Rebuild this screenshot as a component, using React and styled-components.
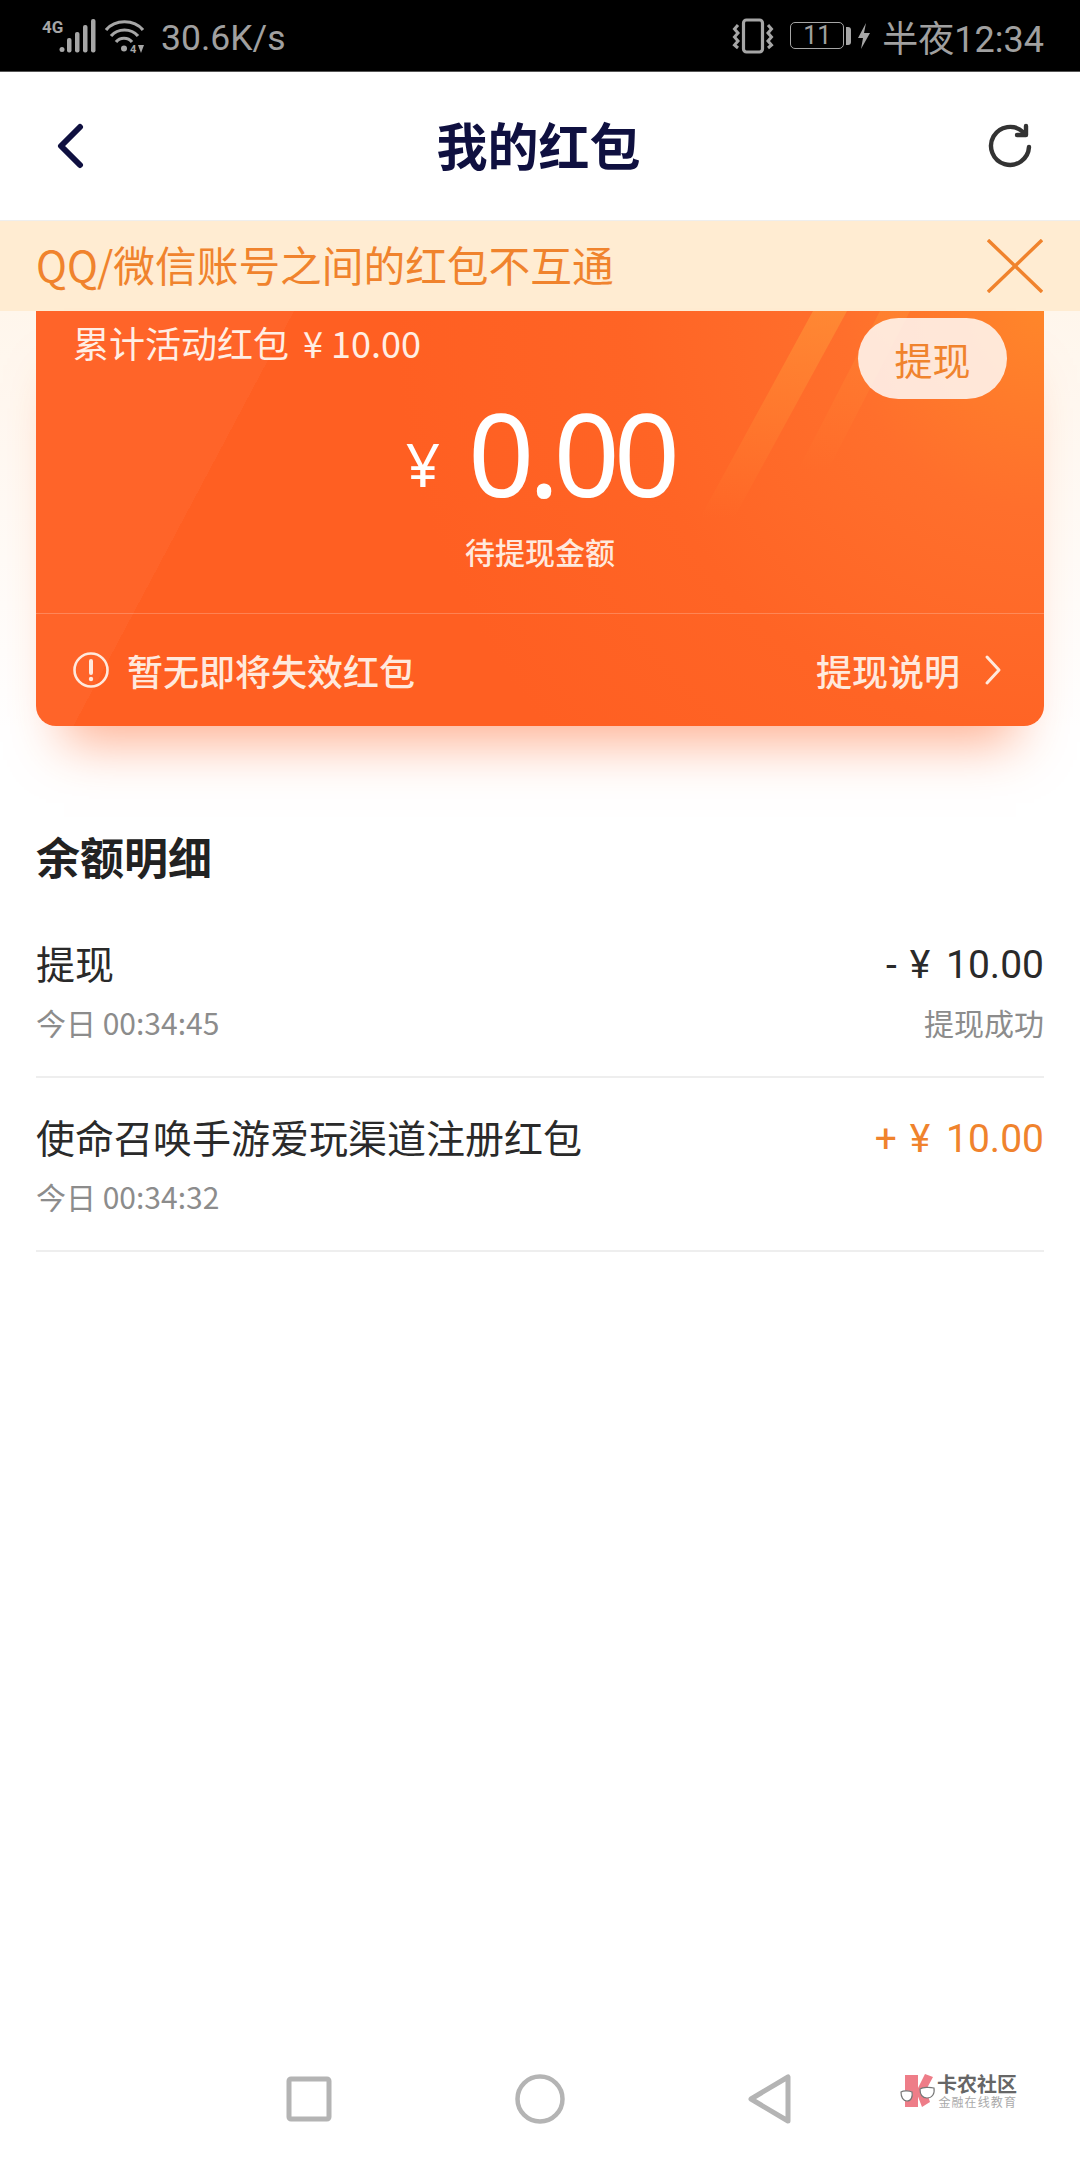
import React from "react";
import styled, { createGlobalStyle } from "styled-components";

const cjk = `"Noto Sans CJK SC", "Noto Sans", sans-serif`;

const GlobalStyle = createGlobalStyle`
  html, body {
    margin: 0;
    padding: 0;
    background: #fff;
  }
  * {
    box-sizing: border-box;
  }
`;

const records = [
  { title: "提现", time: "今日 00:34:45", sign: "-", amount: "10.00", status: "提现成功" },
  { title: "使命召唤手游爱玩渠道注册红包", time: "今日 00:34:32", sign: "+", amount: "10.00", income: true },
];

const App = () => {
  return (
    <Page>
      <GlobalStyle />
      <StatusBar>
        <StatusGroup>
          <SignalIcon width="56" height="38" viewBox="0 -4 56 38" fill="#a6a6a6">
            <text x="0" y="14" fontSize="17" fontWeight="700" fontFamily="Roboto, sans-serif">4G</text>
            <circle cx="20" cy="30.5" r="2.5" />
            <rect x="25" y="19" width="4.5" height="14.5" rx="2" />
            <rect x="33" y="13" width="4.5" height="20.5" rx="2" />
            <rect x="41" y="6" width="4.5" height="27.5" rx="2" />
            <rect x="49" y="0" width="4.5" height="33.5" rx="2" />
          </SignalIcon>
          <WifiIcon width="40" height="40" viewBox="0 0 40 40" fill="none" stroke="#a6a6a6" strokeWidth="3.2">
            <path d="M1 11C10 0 29 0 38 11" />
            <path d="M6 17C13 9 26 9 33 17" />
            <path d="M11 23C15 18 23 18 27 23" />
            <circle cx="19" cy="29.5" r="3" fill="#a6a6a6" stroke="none" />
            <text x="25" y="33.5" fontSize="11" fontWeight="700" fontFamily="Roboto, sans-serif" fill="#a6a6a6" stroke="none">4</text>
            <path d="M33 26h6l-3 8z" fill="#a6a6a6" stroke="none" />
          </WifiIcon>
          <Speed>30.6K/s</Speed>
        </StatusGroup>
        <StatusGroup>
          <svg width="42" height="36" viewBox="0 0 42 36" fill="none" stroke="#a6a6a6">
            <rect x="11.5" y="2" width="19" height="32" rx="3" strokeWidth="3.2" />
            <path d="M6 7L2.5 11 6 15 2.5 19 6 23 2.5 27 6 30M36 7l3.5 4-3.5 4 3.5 4-3.5 4 3.5 4-3.5 3" strokeWidth="3" />
          </svg>
          <Battery>
            <BatteryBody>11</BatteryBody>
            <BatteryCap />
          </Battery>
          <svg width="12" height="26" viewBox="0 0 12 26" fill="#a6a6a6">
            <path d="M8 0L0 15h5L3 26l9-16H6z" />
          </svg>
          <Clock>半夜12:34</Clock>
        </StatusGroup>
      </StatusBar>

      <NavBar>
        <IconSlot>
          <svg width="28" height="48" viewBox="0 0 28 48" fill="none" stroke="#0f1040" strokeWidth="6" strokeLinecap="round" strokeLinejoin="round">
            <path d="M24 5L5 24l19 19" />
          </svg>
        </IconSlot>
        <NavTitle>我的红包</NavTitle>
        <IconSlot $right>
          <svg width="44" height="46" viewBox="0 0 44 46" fill="none" stroke="#333" strokeWidth="4.4" strokeLinecap="round">
            <path d="M41 24a19 19 0 1 1-6-15" />
            <path d="M38 3v9h-9" strokeLinejoin="round" />
          </svg>
        </IconSlot>
      </NavBar>

      <Banner>
        <BannerText>QQ/微信账号之间的红包不互通</BannerText>
        <svg width="56" height="54" viewBox="0 0 56 54" stroke="#f0832d" strokeWidth="3.4">
          <path d="M1 1l54 52M55 1L1 53" />
        </svg>
      </Banner>

      <CardArea>
        <Card>
          <CardTop>
            <Total>
              累计活动红包<TotalYen>¥</TotalYen>10.00
            </Total>
            <WithdrawButton>提现</WithdrawButton>
          </CardTop>
          <Balance>
            <BalanceUnit>¥</BalanceUnit>
            <BalanceValue>0.00</BalanceValue>
          </Balance>
          <BalanceLabel>待提现金额</BalanceLabel>
          <CardFooter>
            <FooterSide>
              <svg width="36" height="36" viewBox="0 0 36 36" fill="none" stroke="#ffe9dd" strokeWidth="2.6">
                <circle cx="18" cy="18" r="16.5" />
                <path d="M18 9v12" strokeWidth="4" strokeLinecap="round" />
                <circle cx="18" cy="27" r="2.2" fill="#ffe9dd" stroke="none" />
              </svg>
              暂无即将失效红包
            </FooterSide>
            <FooterSide $wide>
              提现说明
              <svg width="18" height="32" viewBox="0 0 18 32" fill="none" stroke="#ffe9dd" strokeWidth="3" strokeLinecap="round" strokeLinejoin="round">
                <path d="M3 3l12 13L3 29" />
              </svg>
            </FooterSide>
          </CardFooter>
        </Card>
      </CardArea>

      <Details>
        <DetailsTitle>余额明细</DetailsTitle>
        {records.map((item) => (
          <Row key={item.time}>
            <RowLine>
              <RowTitle>{item.title}</RowTitle>
              <Amount $income={item.income}>
                <AmountSign>{item.sign}</AmountSign>
                <AmountYen>¥</AmountYen> {item.amount}
              </Amount>
            </RowLine>
            <RowLine>
              <RowMeta>{item.time}</RowMeta>
              <RowMeta>{item.status}</RowMeta>
            </RowLine>
          </Row>
        ))}
      </Details>

      <NavKeys>
        <svg width="46" height="46" viewBox="0 0 46 46" fill="none" stroke="#b4b4b4" strokeWidth="5">
          <rect x="3" y="3" width="40" height="40" rx="2" />
        </svg>
        <svg width="50" height="50" viewBox="0 0 50 50" fill="none" stroke="#b4b4b4" strokeWidth="4.5">
          <circle cx="25" cy="25" r="22.5" />
        </svg>
        <svg width="44" height="50" viewBox="0 0 44 50" fill="none" stroke="#b4b4b4" strokeWidth="5" strokeLinejoin="round">
          <path d="M40 3v44L3 25z" />
        </svg>
      </NavKeys>

      <Watermark>
        <svg width="36" height="34" viewBox="0 0 36 34">
          <path d="M5 1h13v32H5z" fill="#ee7d88" />
          <path d="M17 16L25 0l8 3-7 13 4 12-8 5-5-13z" fill="#ee7d88" />
          <path d="M1 18c3-2 9-1 11 0 1 5-1 9-5 9s-6-4-6-9z" fill="#fff" stroke="#777" strokeWidth="1.2" />
          <path d="M20 15c3-2 10-2 14-1 1 6-2 10-7 10s-7-4-7-9z" fill="#fff" stroke="#777" strokeWidth="1.2" />
        </svg>
        <WatermarkText>
          <WatermarkName>卡农社区</WatermarkName>
          <WatermarkSub>金融在线教育</WatermarkSub>
        </WatermarkText>
      </Watermark>
    </Page>
  );
};

const Page = styled.div`
  position: relative;
  width: 1080px;
  height: 2160px;
  overflow: hidden;
  background: #fff;
  font-family: ${cjk};
`;

const StatusBar = styled.div`
  height: 72px;
  padding: 0 36px 0 42px;
  display: flex;
  align-items: center;
  justify-content: space-between;
  background: #000;
  border-bottom: 1px solid #555;
  color: #a0a0a0;
`;

const StatusGroup = styled.div`
  display: flex;
  align-items: center;
  gap: 7px;
`;

const SignalIcon = styled.svg`
  margin-bottom: 4px;
`;

const WifiIcon = styled.svg`
  margin-top: 6px;
`;

const Speed = styled.span`
  margin: 4px 0 0 9px;
  font-family: Roboto, sans-serif;
  font-size: 35.5px;
`;

const Battery = styled.div`
  display: flex;
  align-items: center;
  margin-left: 9px;
  gap: 2px;
`;

const BatteryBody = styled.div`
  width: 54px;
  height: 27px;
  border: 1.5px solid #a6a6a6;
  border-radius: 5px;
  display: flex;
  align-items: center;
  justify-content: center;
  font-family: Roboto, sans-serif;
  font-size: 25px;
`;

const BatteryCap = styled.div`
  width: 5px;
  height: 18px;
  border-radius: 0 3px 3px 0;
  background: #a6a6a6;
`;

const Clock = styled.span`
  margin-left: 5px;
  font-family: Roboto, ${cjk};
  font-size: 36px;
`;

const NavBar = styled.div`
  height: 149px;
  padding: 0 36px 0 56px;
  display: flex;
  align-items: center;
  justify-content: space-between;
  background: #fff;
  border-bottom: 1px solid #eee;
`;

const IconSlot = styled.div`
  width: 100px;
  display: flex;
  justify-content: ${(p) => (p.$right ? "flex-end" : "flex-start")};
  padding-right: ${(p) => (p.$right ? "12px" : "0")};
`;

const NavTitle = styled.div`
  margin: 0 0 4px -23px;
  font-size: 51px;
  font-weight: 700;
  color: #0f1040;
`;

const Banner = styled.div`
  height: 90px;
  padding: 0 37px 0 36px;
  display: flex;
  align-items: center;
  justify-content: space-between;
  background: #ffecd2;
`;

const BannerText = styled.div`
  margin-bottom: 5px;
  font-size: 41.7px;
  color: #f0832d;
`;

const CardArea = styled.div`
  padding: 0 36px;
  background: linear-gradient(#fff6ec, #fffdfb 340px, #fff 420px);
`;

const Card = styled.div`
  position: relative;
  isolation: isolate;
  overflow: hidden;
  height: 415px;
  border-radius: 0 0 20px 20px;
  color: #fff;
  background:
    linear-gradient(118deg, rgba(255, 255, 255, 0.03) 0 21%, transparent 21%),
    radial-gradient(circle at 100% 0, #ff862a 0, #ff6f2c 200px, #ff6425 420px, #ff5f22 650px);
  box-shadow: 0 44px 50px -28px rgba(255, 96, 34, 0.5);

  &::before,
  &::after {
    content: "";
    position: absolute;
    top: 0;
    left: 0;
    right: 0;
    z-index: -1;
  }
  &::before {
    height: 207px;
    background: linear-gradient(rgba(255, 165, 60, 0.45), rgba(255, 165, 60, 0));
    clip-path: polygon(777px 0, 811px 0, 698px 207px, 664px 207px);
  }
  &::after {
    height: 161px;
    background: linear-gradient(rgba(255, 165, 60, 0.25), rgba(255, 165, 60, 0));
    clip-path: polygon(844px 0, 874px 0, 791px 161px, 761px 161px);
  }
`;

const CardTop = styled.div`
  padding: 7px 37px 0 37px;
  height: 88px;
  display: flex;
  justify-content: space-between;
  align-items: flex-start;
`;

const Total = styled.div`
  font-size: 36px;
  line-height: 48px;
  color: #ffeee4;
`;

const TotalYen = styled.span`
  margin: 0 8px 0 14px;
`;

const WithdrawButton = styled.div`
  width: 149px;
  height: 81px;
  border-radius: 41px;
  display: flex;
  align-items: center;
  justify-content: center;
  background: rgba(255, 255, 255, 0.82);
  color: #f0832d;
  font-size: 38px;
`;

const Balance = styled.div`
  margin-top: -3px;
  height: 112px;
  display: flex;
  justify-content: center;
  align-items: center;
  gap: 28px;
`;

const BalanceUnit = styled.span`
  margin-top: 24px;
  font-family: "Noto Sans", sans-serif;
  font-size: 60px;
`;

const BalanceValue = styled.span`
  font-family: "Noto Sans", sans-serif;
  font-size: 116px;
  line-height: 112px;
  letter-spacing: -6px;
`;

const BalanceLabel = styled.div`
  margin-top: 21px;
  text-align: center;
  font-size: 30px;
  font-weight: 500;
  line-height: 44px;
  color: #ffe9dd;
`;

const CardFooter = styled.div`
  margin-top: 40px;
  height: 113px;
  padding: 0 42px 0 37px;
  display: flex;
  justify-content: space-between;
  align-items: center;
  border-top: 1px solid rgba(255, 255, 255, 0.22);
`;

const FooterSide = styled.div`
  display: flex;
  align-items: center;
  gap: ${(p) => (p.$wide ? "24px" : "18px")};
  font-size: 36px;
  font-weight: 500;
  color: #ffe9dd;
`;

const Details = styled.div`
  padding: 0 36px;
`;

const DetailsTitle = styled.div`
  margin: 101px 0 19px;
  font-size: 44px;
  font-weight: 700;
  line-height: 58px;
  color: #222;
`;

const Row = styled.div`
  height: 174px;
  padding-top: 36px;
  display: flex;
  flex-direction: column;
  gap: 16px;
  border-bottom: 2px solid #eee;
`;

const RowLine = styled.div`
  display: flex;
  justify-content: space-between;
  align-items: center;
  height: 44px;
`;

const RowTitle = styled.div`
  font-size: 39px;
  line-height: 44px;
  color: #2a2a2a;
`;

const Amount = styled.div`
  margin-top: 5px;
  font-family: Roboto, ${cjk};
  font-size: 39px;
  line-height: 44px;
  color: ${(p) => (p.$income ? "#f0832d" : "#2a2a2a")};
`;

const AmountSign = styled.span`
  margin-right: 13px;
`;

const AmountYen = styled.span`
  margin-right: 6px;
`;

const RowMeta = styled.div`
  font-size: 30px;
  color: #8c8c8c;
`;

const NavKeys = styled.div`
  position: absolute;
  left: 286px;
  top: 2074px;
  width: 506px;
  display: flex;
  align-items: center;
  justify-content: space-between;
`;

const Watermark = styled.div`
  position: absolute;
  left: 900px;
  top: 2073px;
  display: flex;
  align-items: center;
  gap: 1px;
`;

const WatermarkText = styled.div`
  display: flex;
  flex-direction: column;
  align-items: flex-end;
`;

const WatermarkName = styled.div`
  font-size: 20px;
  line-height: 22px;
  font-weight: 700;
  color: #666;
`;

const WatermarkSub = styled.div`
  font-size: 12px;
  line-height: 14px;
  letter-spacing: 1.1px;
  color: #aaa;
`;

export default App;
